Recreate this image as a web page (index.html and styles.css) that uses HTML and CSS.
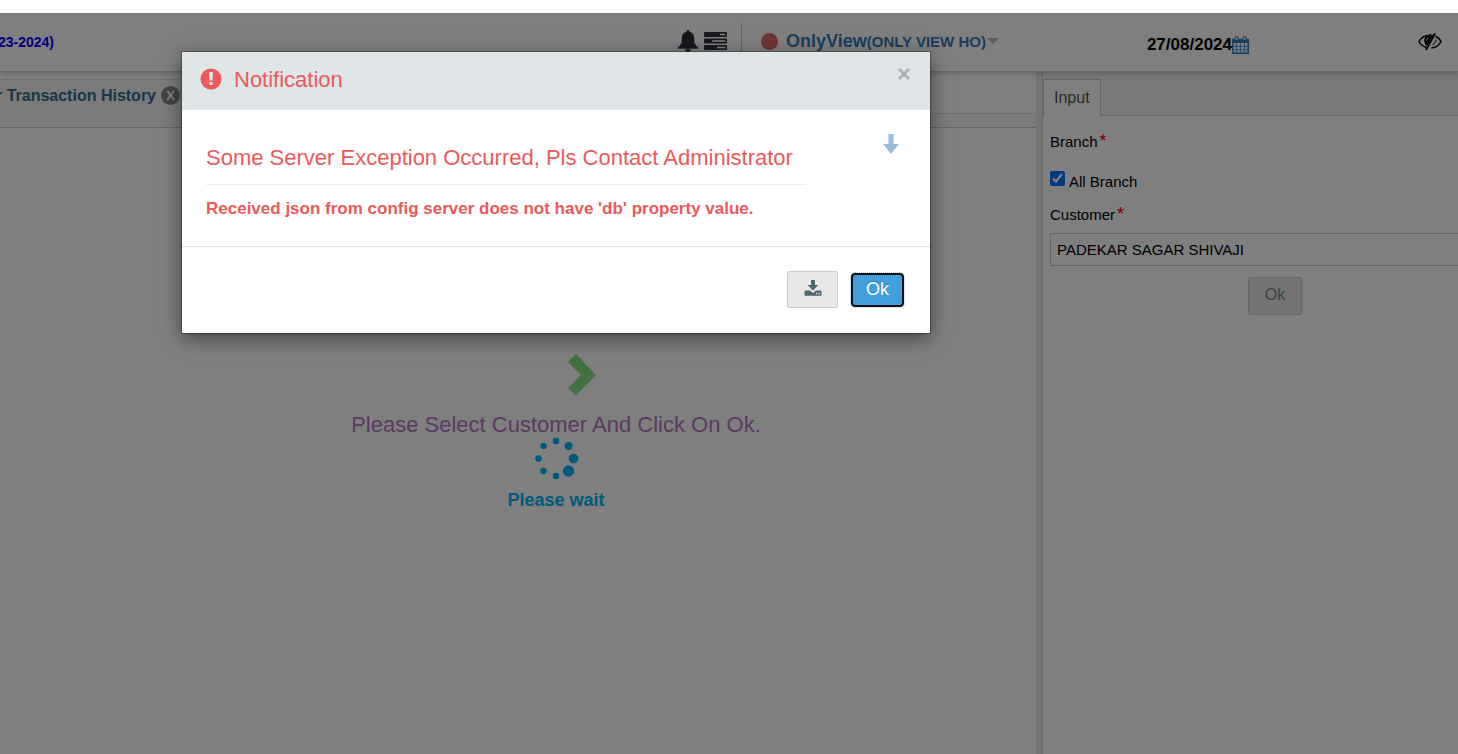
FILE: index.html
```html
<!DOCTYPE html>
<html lang="en">
	<head>
		<meta charset="UTF-8">
		<title>Customer Transaction History</title>
		<link rel="stylesheet" href="styles.css">
	</head>
	<body>
		<div class="app">
			<header class="header">
				<div class="header-year">23-2024)</div>
				<div class="header-user">
					<svg class="icon-bell" viewBox="0 0 22 22" width="22" height="22">
						<path d="M11 0a1.500 1.500 0 0 1 1.500 1.800C16 2.600 17.200 5.200 17.200 9c0 4.500 1.600 6.800 4 8.500v1.300H.8v-1.300c2.400-1.700 4-4 4-8.500 0-3.800 1.200-6.400 4.700-7.200A1.500 1.500 0 0 1 11 0zM8.300 19.300h5.400a2.700 2.700 0 0 1-5.400 0z"/>
					</svg>
					<svg class="icon-server" viewBox="0 0 23 18" width="23" height="18">
						<rect x="0" y="0" width="23" height="5" rx="1"/>
						<rect x="0" y="6.500" width="23" height="5" rx="1"/>
						<rect x="0" y="13" width="23" height="5" rx="1"/>
						<path d="M16 2.500h5.500M8 9h13.500M13 15.500h8.500" stroke="#fff" stroke-width="1.300"/>
					</svg>
					<span class="header-line"></span>
					<span class="header-dot"></span>
					<a class="user-link" href="#">OnlyView<small>(ONLY VIEW HO)</small></a>
					<span class="caret"></span>
				</div>
				<div class="header-date">
					<span>27/08/2024</span>
					<svg class="icon-calendar" viewBox="0 0 17 18" width="17" height="18">
						<path d="M0 3h17v4H0z" fill="#337ab7"/>
						<path d="M.8 3.500h15.400v13.700H.8z" fill="none" stroke="#337ab7" stroke-width="1.500"/>
						<path d="M4.500 7v10M8.500 7v10M12.500 7v10M1 10.300h15M1 13.700h15" stroke="#5a96c8"/>
						<path d="M3.200.8h2.600v3.700H3.200zM11.200.8h2.600v3.700h-2.600z" fill="#fff" stroke="#337ab7"/>
					</svg>
				</div>
				<svg class="icon-eye" viewBox="0 0 24 18" width="24" height="18">
					<path d="M17.500 3.200C20.500 4.500 22.200 6.600 23 8.500c-1.800 3.600-5 6-9.500 6.500M8.500 14.500C5 13.400 2.300 11 1 8.500 3 4.500 7 2.200 12 2.200l2.500.1" fill="none" stroke="#000" stroke-width="1.500"/>
					<path d="M7 4.500c1-1.500 4-2 8-2L9 13C6.200 11.500 5.500 7 7 4.500z"/>
					<path d="M17 .5L8 17" stroke="#000" stroke-width="1.800"/>
					<path d="M18 6.500c0 2.500-1.400 4.500-3.500 5.500" fill="none" stroke="#000"/>
					<path d="M8.500 7.500c.3-1.400 1-2.200 2-2.500" fill="none" stroke="#fff"/>
				</svg>
			</header>

			<div class="main">
				<section class="content">
					<div class="tabs">
						<div class="tab">
							<span class="tab-title">r Transaction History</span>
							<button class="tab-close" type="button">X</button>
						</div>
						<div class="tabs-rest"></div>
					</div>
					<div class="prompt">
						<svg class="icon-chevron" viewBox="0 0 30 42" width="30" height="42">
							<path d="M1 8l8-8 20 21L9 41.500 1 34l13-13z"/>
						</svg>
						<p class="prompt-text">Please Select Customer And Click On Ok.</p>
						<svg class="spinner" viewBox="0 0 46 46" width="46" height="46">
							<circle cx="22" cy="5" r="3.200"/>
							<circle cx="34.500" cy="10" r="4"/>
							<circle cx="39.500" cy="22.500" r="4.800"/>
							<circle cx="34.500" cy="35" r="5.700"/>
							<circle cx="22" cy="40" r="3.200"/>
							<circle cx="9.500" cy="35" r="3.200"/>
							<circle cx="4.500" cy="22.500" r="3.200"/>
							<circle cx="9.500" cy="10" r="3.200"/>
						</svg>
						<p class="wait-text">Please wait</p>
					</div>
				</section>

				<aside class="panel">
					<div class="panel-tabs">
						<a class="panel-tab" href="#">Input</a>
					</div>
					<form class="panel-form">
						<div class="label">Branch<span class="star">*</span></div>
						<div class="check">
							<input type="checkbox" id="all_branch" checked>
							<label for="all_branch">All Branch</label>
						</div>
						<label class="label" for="customer">Customer<span class="star">*</span></label>
						<input class="text-input" type="text" id="customer" value="PADEKAR SAGAR SHIVAJI">
						<button class="btn panel-ok" type="button">Ok</button>
					</form>
				</aside>
			</div>

			<div class="backdrop"></div>

			<div class="modal" role="dialog" aria-labelledby="modal_title">
				<div class="modal-header">
					<svg class="icon-alert" viewBox="0 0 22 22" width="22" height="22">
						<circle cx="11" cy="11" r="10.500" fill="#eb5a5a"/>
						<path d="M9 4h4l-.5 8.500h-3zM9.300 14h3.400v3H9.300z" fill="#e0e5e8"/>
					</svg>
					<h4 class="modal-title" id="modal_title">Notification</h4>
					<button class="modal-close" type="button" aria-label="Close">
						<svg viewBox="0 0 12 12" width="12" height="12"><path d="M1 1l10 10M11 1L1 11"/></svg>
					</button>
				</div>
				<div class="modal-body">
					<div class="message">
						<h3 class="message-title">Some Server Exception Occurred, Pls Contact Administrator</h3>
						<p class="message-text">Received json from config server does not have 'db' property value.</p>
					</div>
					<a class="more" href="#" aria-label="Details">
						<svg viewBox="0 0 16 20" width="16" height="20"><path d="M5.500 0h5v10H16l-8 10-8-10h5.500z"/></svg>
					</a>
				</div>
				<div class="modal-footer">
					<button class="btn btn-download" type="button" aria-label="Download">
						<svg viewBox="0 0 18 16" width="18" height="16">
							<path d="M7 0h4v5h3.500L9 10.500 3.500 5H7z"/>
							<path d="M1.500 10.500H6l3 2.500 3-2.500h4.500l1 1V15q0 .8-.8.8H1.300q-.8 0-.8-.8v-3.500z"/>
							<path d="M12 13.500h1.300M14.500 13.500h1.300" stroke="#e8e8e8" stroke-width="1.300"/>
						</svg>
					</button>
					<button class="btn-ok" type="button">Ok</button>
				</div>
			</div>
		</div>
	</body>
</html>
```

FILE: styles.css
```css
*{
	margin: 0;
	padding: 0;
	box-sizing: border-box;
}
body{
	font-family: "Liberation Sans", Arial, sans-serif;
	font-size: 15px;
	color: #000;
	background: #fff;
	padding-top: 13px;
}
svg{
	display: block;
}
a{
	text-decoration: none;
}
.app{
	position: relative;
	min-height: calc(100vh - 13px);
	display: flex;
	flex-direction: column;
	overflow: hidden;
}
.backdrop{
	position: absolute;
	inset: 0;
	background: rgba(0,0,0,.5);
}

/* header */
.header{
	position: relative;
	display: flex;
	align-items: center;
	height: 59px;
	padding-right: 16px;
	border-bottom: 1px solid #ccc;
	box-shadow: 0 1px 6px rgba(0,0,0,.25);
}
.header-year{
	display: flex;
	justify-content: flex-end;
	width: 54px;
	white-space: nowrap;
	font-size: 14px;
	font-weight: bold;
	color: #00f;
}
.header-user{
	display: flex;
	align-items: center;
	margin-left: auto;
	padding-bottom: 2px;
}
.icon-bell,.icon-server{
	fill: #2f323e;
}
.icon-server{
	margin-left: 5px;
}
.header-line{
	width: 1px;
	height: 36px;
	margin: 0 19px 0 14px;
	background: #c4c4c4;
}
.header-dot{
	width: 17px;
	height: 17px;
	margin-right: 8px;
	border-radius: 50%;
	background: #e06666;
}
.user-link{
	font-size: 18px;
	font-weight: bold;
	color: #337ab7;
}
.user-link small{
	font-size: 15px;
}
.caret{
	margin-left: 1px;
	border: 6px solid transparent;
	border-top-color: #bbb;
	border-bottom: 0;
}
.header-date{
	display: flex;
	align-items: center;
	margin-left: 148px;
	padding-top: 6px;
	font-size: 17px;
	font-weight: bold;
}
.icon-eye{
	margin-left: 169px;
}

/* main area */
.main{
	display: flex;
	flex: 1;
}
.content{
	flex: 1;
	padding-top: 7px;
}
.tabs{
	display: flex;
	height: 49px;
	border-bottom: 1px solid #ccc;
	background: #f6f6f6;
}
.tab{
	display: flex;
	align-items: flex-start;
	justify-content: flex-end;
	gap: 5px;
	width: 180px;
	padding-top: 7px;
	box-shadow: inset 0 1px #ddd;
}
.tab-title{
	font-size: 16px;
	line-height: 20px;
	font-weight: bold;
	white-space: nowrap;
	color: #316d8c;
}
.tab-close{
	flex: none;
	width: 19px;
	height: 19px;
	border: 0;
	border-radius: 50%;
	background: #888;
	color: #fff;
	font: bold 13px "Liberation Sans", Arial, sans-serif;
}
.tabs-rest{
	flex: 1;
	height: 35px;
	border-bottom: 1px solid #ddd;
	background: #fff;
}
.prompt{
	display: flex;
	flex-direction: column;
	align-items: center;
	padding: 226px 0 0 76px;
}
.icon-chevron{
	margin-left: 52px;
	fill: #84e084;
}
.prompt-text{
	margin-top: 18px;
	font-size: 22px;
	line-height: 22px;
	color: #b872c4;
}
.spinner{
	margin-left: 2px;
	fill: #00b4f8;
}
.wait-text{
	margin-top: 8px;
	font-size: 18px;
	line-height: 20px;
	font-weight: bold;
	color: #00b4f8;
}

/* right panel */
.panel{
	width: 422px;
	border-left: 6px solid #e8e8e8;
}
.panel-tabs{
	display: flex;
	height: 44px;
	padding-top: 7px;
	border-left: 1px solid #ccc;
	border-bottom: 1px solid #ccc;
	background: #f2f2f2;
}
.panel-tab{
	height: 37px;
	padding: 0 10px;
	border: 1px solid #ccc;
	border-bottom: 0;
	background: #fff;
	font-size: 16px;
	line-height: 36px;
	color: #555;
}
.panel-form{
	display: flex;
	flex-direction: column;
	min-height: calc(100% - 44px);
	padding: 17px 0 0 7px;
	border-left: 1px solid #ccc;
}
.label{
	line-height: 18px;
}
.star{
	margin-left: 2px;
	font-size: 18px;
	line-height: 0;
	color: #f00;
}
.check{
	display: flex;
	gap: 4px;
	margin: 20px 0 15px;
	line-height: 18px;
}
.check label{
	padding-top: 2px;
}
.check input{
	width: 15px;
	height: 15px;
	accent-color: #0075ff;
}
.text-input{
	height: 33px;
	margin-top: 9px;
	padding: 0 6px;
	border: 1px solid #ccc;
	border-right: 0;
	border-radius: 2px 0 0 2px;
	font: 15px "Liberation Sans", Arial, sans-serif;
}
.btn{
	border: 1px solid #ccc;
	border-radius: 2px;
	background: #e8e8e8;
	font: 16px "Liberation Sans", Arial, sans-serif;
}
.panel-ok{
	width: 54px;
	height: 38px;
	margin: 11px 0 0 198px;
	padding-bottom: 2px;
	color: #67858c;
}

/* notification */
.modal{
	position: absolute;
	top: 39px;
	left: 182px;
	width: 748px;
	background: #fff;
	box-shadow: 0 0 0 1px rgba(0,0,0,.3), 0 5px 18px rgba(0,0,0,.5);
}
.modal-header{
	display: flex;
	align-items: flex-start;
	height: 58px;
	padding: 16px 20px 0 18px;
	background: #e0e5e8;
}
.modal-title{
	margin-left: 12px;
	font-size: 22px;
	line-height: 24px;
	font-weight: normal;
	color: #eb5a5a;
}
.modal-close{
	margin-left: auto;
	border: 0;
	background: none;
}
.modal-close path{
	stroke: #b0b4b7;
	stroke-width: 3;
}
.modal-body{
	display: flex;
	justify-content: space-between;
	height: 137px;
	padding: 24px 31px 0 24px;
	border-bottom: 1px solid #e5e5e5;
	color: #eb5a5a;
}
.message{
	min-width: 600px;
}
.message-title{
	padding: 10px 0 12px;
	border-bottom: 1px solid #eee;
	font-size: 22px;
	line-height: 28px;
	font-weight: normal;
}
.message-text{
	margin-top: 14px;
	font-size: 17px;
	line-height: 20px;
	font-weight: bold;
}
.more{
	height: 20px;
	fill: #96bbde;
}
.modal-footer{
	display: flex;
	justify-content: flex-end;
	gap: 13px;
	padding: 24px 26px 25px;
}
.btn-download{
	display: flex;
	align-items: center;
	justify-content: center;
	width: 51px;
	height: 37px;
	padding-bottom: 3px;
	fill: #4c6870;
}
.btn-ok{
	width: 53px;
	height: 34px;
	margin-top: 2px;
	padding-bottom: 2px;
	border: 2px solid #101010;
	border-radius: 4px;
	outline: 1px dotted #9ccdee;
	background: #419fdc;
	color: #fff;
	font: 18px "Liberation Sans", Arial, sans-serif;
	text-shadow: 0 -1px rgba(0,0,0,.25);
}
```
